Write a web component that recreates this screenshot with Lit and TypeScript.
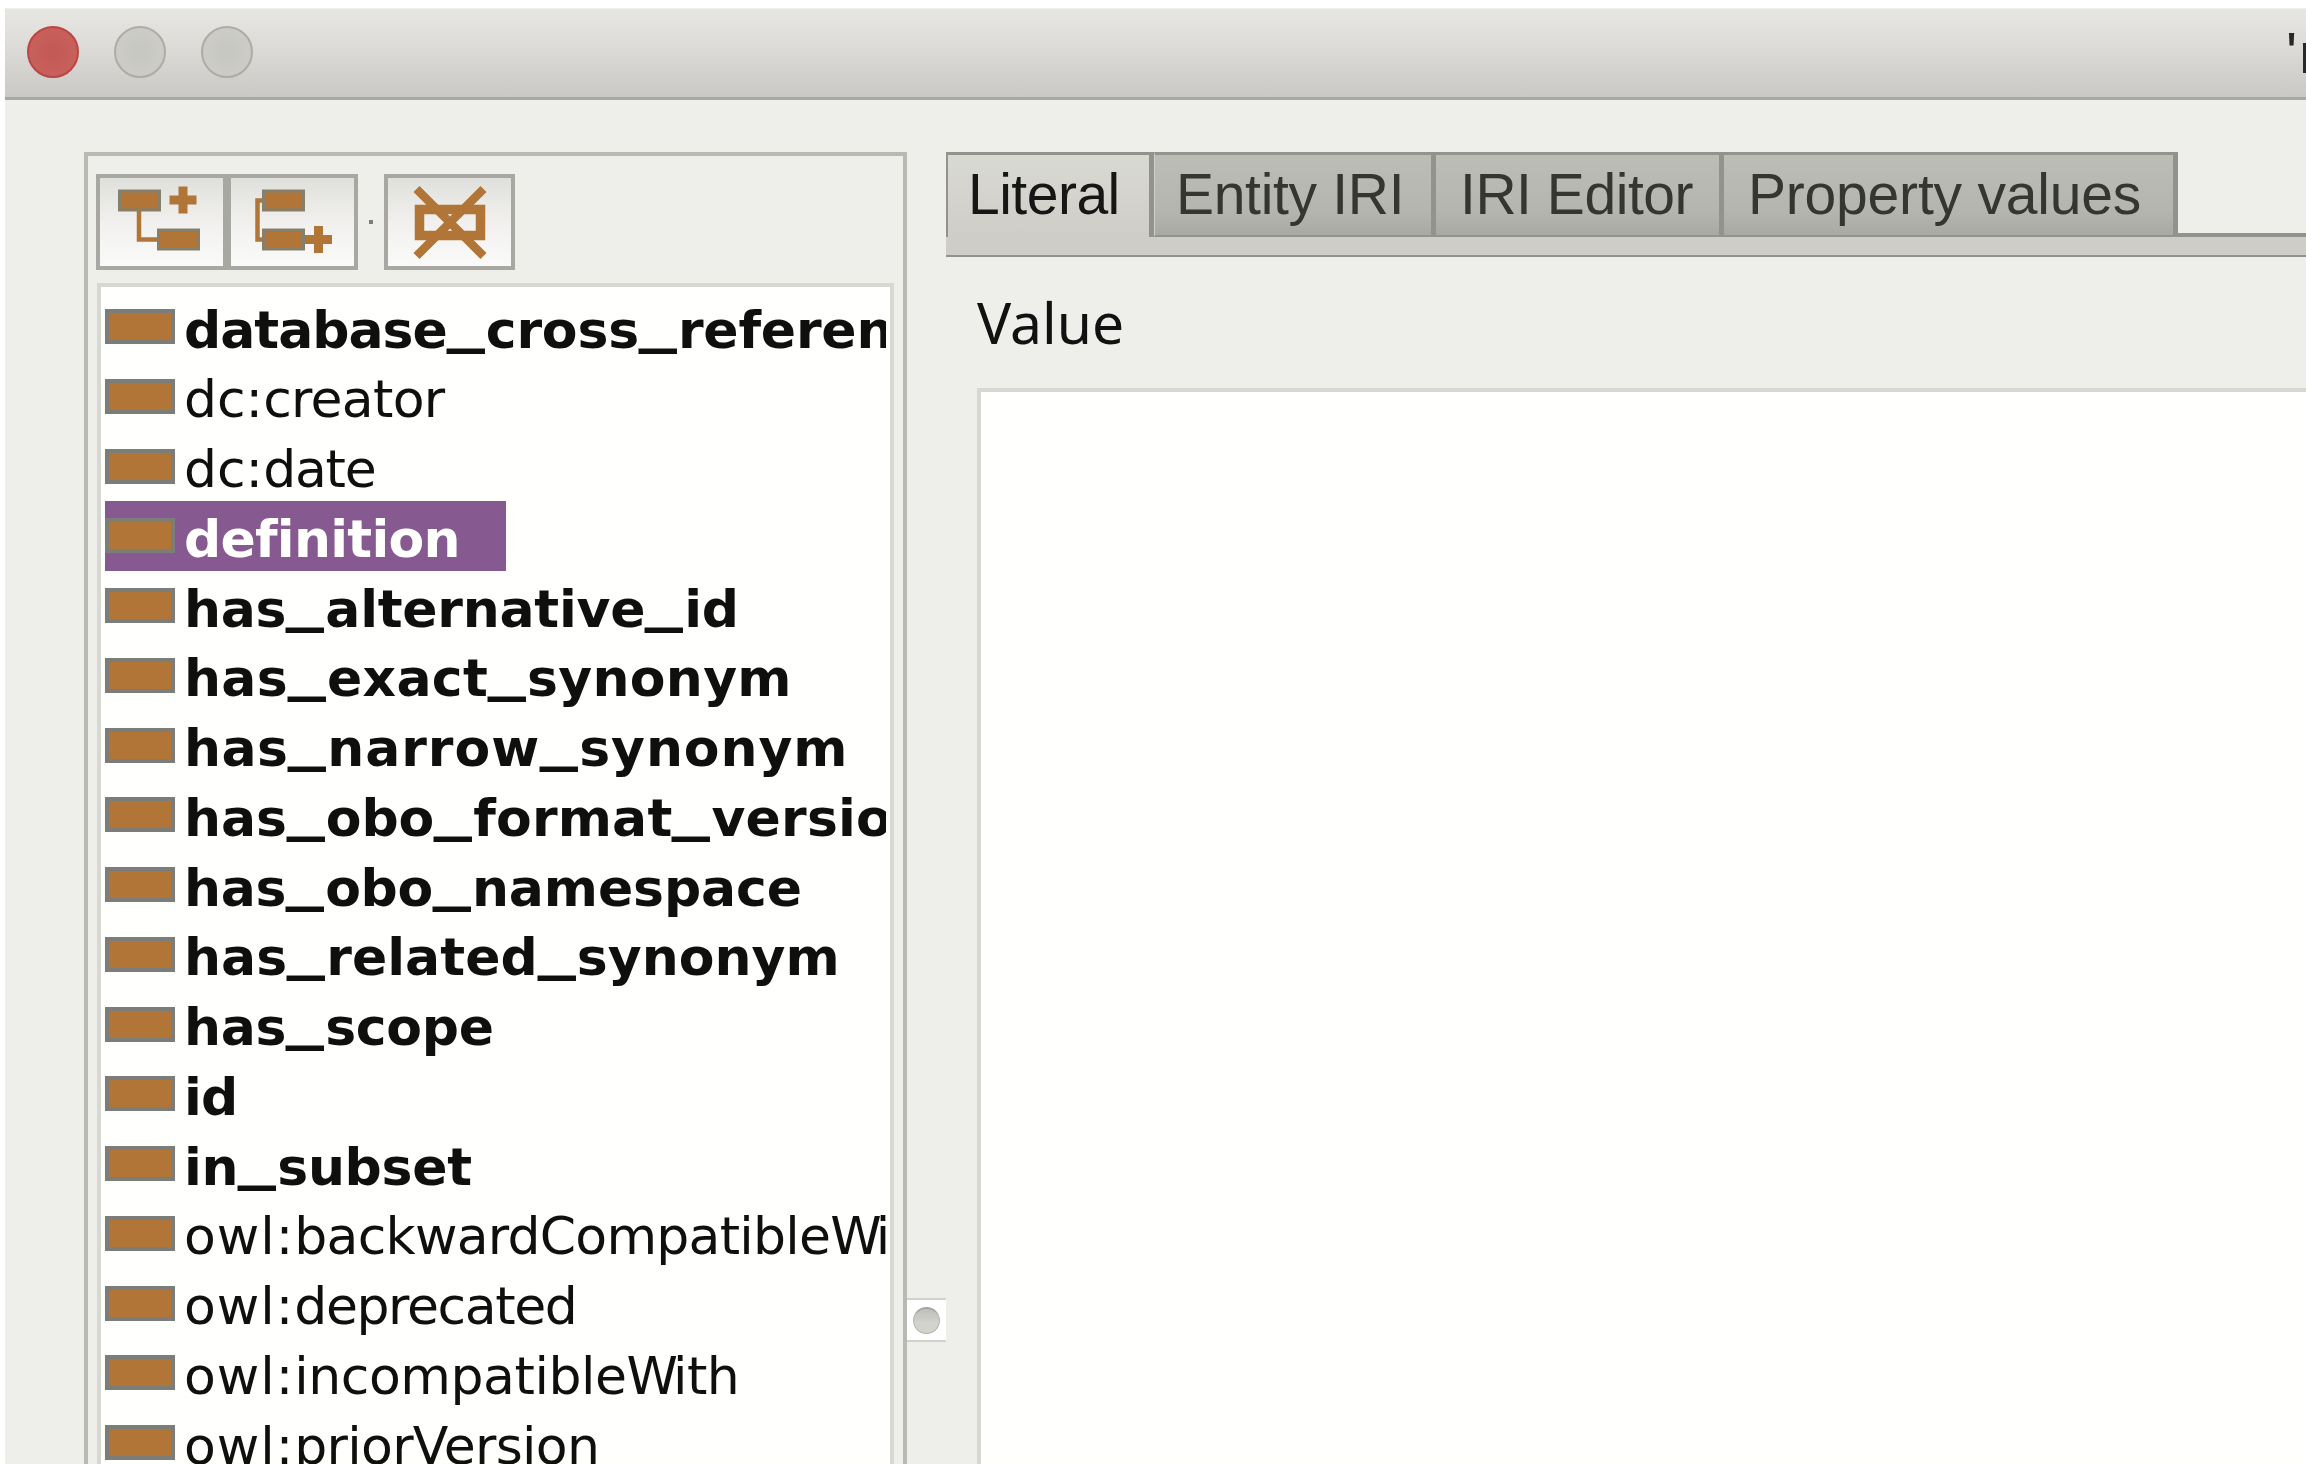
import { LitElement, html, css, svg } from "lit";
import { customElement } from "lit/decorators.js";
import { classMap } from "lit/directives/class-map.js";
import { styleMap } from "lit/directives/style-map.js";

/** A run of the label and its tracking in pixels. */
type Run = [text: string, tracking: number];

interface Property {
  runs: Run[];
  bold?: boolean;
  selected?: boolean;
}

const PROPERTIES: Property[] = [
  { runs: [["database", -1], ["_cross_reference", -0.2]], bold: true },
  { runs: [["dc:", 0], ["creator", -0.7]] },
  { runs: [["dc:", 0], ["date", -1.2]] },
  { runs: [["definition", -0.75]], bold: true, selected: true },
  { runs: [["has_alternative_id", -0.25]], bold: true },
  { runs: [["has_exact_synonym", 0.3]], bold: true },
  { runs: [["has_", 0.4], ["narrow_synonym", 0.95]], bold: true },
  { runs: [["has_obo", -0.1], ["_format_version", 0.2]], bold: true },
  { runs: [["has_obo", -0.3], ["_namespace", -0.1]], bold: true },
  { runs: [["has_related_synonym", 0.05]], bold: true },
  { runs: [["has_scope", -0.3]], bold: true },
  { runs: [["id", -0.8]], bold: true },
  { runs: [["in_subset", -0.3]], bold: true },
  { runs: [["owl:", 1], ["backwardCompatible", -0.75], ["W", -6], ["ith", 0]] },
  { runs: [["owl:", 1], ["deprecated", -1.4]] },
  { runs: [["owl:", 1], ["incompatible", -0.45], ["W", -5], ["ith", -0.5]] },
  { runs: [["owl:", 1], ["priorVersion", -0.7]] },
];

const node = (x: number, y: number) => svg`
  <rect x=${x} y=${y} width="40" height="19" fill="#b07537" stroke="#85806c" stroke-width="3"/>`;

@customElement("app-root")
export class AppRoot extends LitElement {
  static styles = css`
    :host { display: block; width: 2306px; height: 1470px; background: #fff; overflow: hidden; }
    * { box-sizing: border-box; }
    .window { display: flex; flex-direction: column; width: 2301px; height: 1456px; margin-left: 5px; background: #eeeeea; overflow: hidden; }
    .frame { padding-top: 8px; }
    .titlebar { display: flex; align-items: center; flex: none; height: 92px; padding: 0 0 2px 22px; gap: 35px; border-top: 1px solid #efefed; border-bottom: 3px solid #a9a8a5; background: linear-gradient(#e7e6e2, #dddcd8 40%, #c9c8c4); }
    .light { flex: none; width: 52px; height: 52px; border-radius: 50%; border: 2px solid #abada7; background: radial-gradient(#c5c7c1, #cccbc6 60%); }
    .light.close { border-color: #bb4643; background: radial-gradient(#c45855, #c75f5b 60%); }
    .title { margin-left: 1998px; white-space: nowrap; font: 58px/71px "Liberation Sans", sans-serif; color: #2b2727; letter-spacing: 2px; }
    .body { display: flex; flex: 1; min-height: 0; padding: 52px 0 0 79px; }
    .browser { display: flex; flex-direction: column; flex: none; width: 823px; border: 4px solid #b7b9b2; border-bottom: 0; padding: 18px 9px 0 9px; }
    .toolbar { display: flex; flex: none; align-items: center; height: 96px; margin: 0 0 13px -1px; }
    .tool { width: 131px; height: 96px; border: 4px solid #a6a8a1; background: linear-gradient(#dfe0db, #f1f0ee 50%, #fafaf9); }
    .tool svg { display: block; width: 123px; height: 88px; }
    .dot { width: 4px; height: 4px; margin: 0 11px; background: #7d7e79; }
    .list { flex: 1; min-height: 0; border: 4px solid #d6d8d1; border-bottom: 0; background: #fffffd; padding: 4.5px 4px 0; overflow: hidden; }
    .rows { overflow: hidden; }
    .row { display: flex; width: max-content; height: 69.75px; color: #0f0f0d; }
    .row.selected { width: 401px; background: #865a91; color: #fffffd; }
    .mark { flex: none; width: 70px; height: 35px; margin-top: 17.5px; border: 4px solid #7c7d79; background: #b07537; }
    .name { margin-left: 9px; white-space: nowrap; font: 52px/77px "DejaVu Sans", sans-serif; }
    .bold { font-weight: bold; }
    .us { display: inline-block; width: 39px; height: 77px; vertical-align: top; letter-spacing: 0; }
    .us i { display: block; width: 26px; height: 77px; font-style: normal; transform-origin: 0 50%; transform: translate(-0.5px, -11px) scale(1.48, 1.15); }
    .split { display: flex; flex: none; align-items: flex-end; width: 39px; padding-bottom: 122px; }
    .grip { display: flex; align-items: center; justify-content: center; width: 39px; height: 44px; border: solid #d2d2cc; border-width: 2px 0; background: #fff; }
    .knob { width: 27px; height: 27px; border-radius: 50%; border: 1px solid #b3b4ae; border-top: 2px solid #a4a59f; background: linear-gradient(#bfc0ba, #d3d3ce 60%); }
    .editor { display: flex; flex-direction: column; flex: 1; min-width: 0; }
    .tabs { display: flex; flex: none; height: 85px; font: 57px/78px "Liberation Sans", sans-serif; color: #353531; }
    .tab { height: 85px; border: solid #91938c; border-width: 3px 5px 2px 0; white-space: nowrap; background: linear-gradient(#bcbdb7, #b5b5b0 70%, #a8a9a3); }
    .tab.active { width: 208px; padding-left: 20px; border-left: 2px solid #91938c; border-bottom: 0; color: #161614; background: linear-gradient(#d9d9d4, #cfcdc8); letter-spacing: -0.5px; }
    .entity { width: 282px; border-left: 1px solid #d0d1cc; padding-left: 21px; letter-spacing: -0.3px; }
    .iri { width: 288px; padding-left: 24px; letter-spacing: -0.45px; }
    .values { width: 454px; padding-left: 24px; letter-spacing: -0.2px; }
    .rest { flex: 1; border-bottom: 4px solid #91938c; }
    .strip { flex: none; height: 20px; background: #cfcdc8; border-bottom: 2px solid #91938c; }
    .label { height: 131px; padding: 27px 0 0 31px; font: 57px/76px "Noto Sans", sans-serif; color: #111; }
    .value { flex: 1; margin-left: 31px; border: solid #d6d8d1; border-width: 4px 0 0 4px; background: #fffffd; }
  `;

  private run([text, tracking]: Run) {
    return html`<span style=${styleMap({ letterSpacing: `${tracking}px` })}>${text
      .split("_")
      .map((part, i) => html`${i ? html`<span class="us"><i>_</i></span>` : ""}${part}`)}</span>`;
  }

  render() {
    return html`<div class="frame"><div class="window">
      <div class="titlebar">
        <span class="light close"></span><span class="light"></span><span class="light"></span>
        <span class="title">'n</span>
      </div>
      <div class="body">
        <div class="browser">
          <div class="toolbar">
            <div class="tool"><svg viewBox="0 0 123 88">
              <path d="M39 30V61.500H62" fill="none" stroke="#b07537" stroke-width="4.500"/>
              ${node(19.5, 13)}${node(58.5, 52)}
              <path d="M69.500 22H96.500M83 8.500V35.500" stroke="#b07537" stroke-width="9"/>
            </svg></div>
            <div class="tool"><svg viewBox="0 0 123 88">
              <path d="M34 22.500H26.500V61.500H34" fill="none" stroke="#b07537" stroke-width="4.500"/>
              ${node(32.5, 13)}${node(32.5, 52)}
              <path d="M74 61.500H101M87.500 48V75" stroke="#b07537" stroke-width="9"/>
            </svg></div>
            <span class="dot"></span>
            <div class="tool"><svg viewBox="0 0 123 88">
              <rect x="31.500" y="31.500" width="61" height="26" fill="none" stroke="#b07537" stroke-width="9.500"/>
              <path d="M28.500 11L95.500 78M95.500 11L28.500 78" stroke="#b07537" stroke-width="8.500"/>
            </svg></div>
          </div>
          <div class="list"><div class="rows">
            ${PROPERTIES.map((p) => html`<div class=${classMap({ row: true, selected: !!p.selected })}>
              <span class="mark"></span><span class=${classMap({ name: true, bold: !!p.bold })}>${p.runs.map((r) => this.run(r))}</span></div>`)}
          </div></div>
        </div>
        <div class="split"><div class="grip"><span class="knob"></span></div></div>
        <div class="editor">
          <div class="tabs">
            <div class="tab active">Literal</div>
            <div class="tab entity">Entity IRI</div>
            <div class="tab iri">IRI Editor</div>
            <div class="tab values">Property values</div>
            <div class="rest"></div>
          </div>
          <div class="strip"></div>
          <div class="label">Value</div>
          <div class="value"></div>
        </div>
      </div>
    </div></div>`;
  }
}
